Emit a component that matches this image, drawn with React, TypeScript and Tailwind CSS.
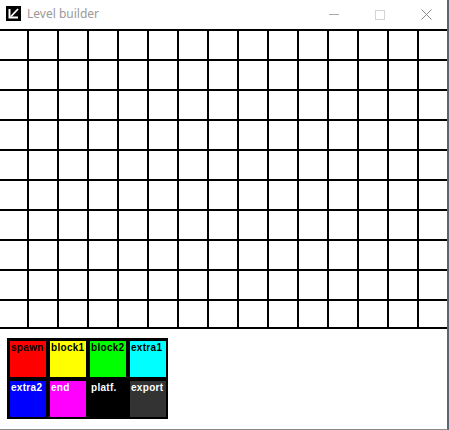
import React from 'react';

const COLS = 16;
const ROWS = 10;

const TOOLS = [
  { label: 'spawn', bg: 'bg-[#ff0000]', fg: 'text-black' },
  { label: 'block1', bg: 'bg-[#ffff00]', fg: 'text-black' },
  { label: 'block2', bg: 'bg-[#00ff00]', fg: 'text-black' },
  { label: 'extra1', bg: 'bg-[#00ffff]', fg: 'text-black' },
  { label: 'extra2', bg: 'bg-[#0000ff]', fg: 'text-white' },
  { label: 'end', bg: 'bg-[#ff00ff]', fg: 'text-white' },
  { label: 'platf.', bg: 'bg-black', fg: 'text-white' },
  { label: 'export', bg: 'bg-[#333333]', fg: 'text-white' },
];

const AppIcon = () => (
  <svg width="15" height="15" viewBox="0 0 15 15">
    <rect width="15" height="15" fill="#000" />
    <path d="M3.5 3 V11.5 H12" stroke="#fff" strokeWidth="2" fill="none" />
    <path d="M5 10.5 L12 3" stroke="#fff" strokeWidth="1.8" fill="none" />
  </svg>
);

const TitleBar = () => (
  <div className="h-[29px] flex items-center bg-white">
    <div className="ml-[6px] mt-[-2px]">
      <AppIcon />
    </div>
    <span className="ml-[6px] text-[12px] text-[#999999] font-['Noto_Sans',sans-serif] mt-[-2px]">
      Level builder
    </span>
    <div className="ml-auto flex items-center h-full">
      <div className="w-[46px] h-full flex items-center justify-center">
        <div className="w-[10px] h-px bg-[#aaaaaa]" />
      </div>
      <div className="w-[46px] h-full flex items-center justify-center">
        <div className="w-[10px] h-[10px] border border-[#d4d4d4]" />
      </div>
      <div className="w-[46px] h-full flex items-center justify-center mr-[-2px]">
        <svg width="11" height="11" viewBox="0 0 11 11">
          <path d="M0.5 0.5 L10.5 10.5 M10.5 0.5 L0.5 10.5" stroke="#8a8a8a" strokeWidth="1" />
        </svg>
      </div>
    </div>
  </div>
);

const LevelGrid = () => (
  <div className="h-[300px] overflow-hidden border-b-2 border-black bg-white">
    <div className="grid grid-cols-[repeat(16,30px)] ml-[-3px]">
      {Array.from({ length: COLS * ROWS }).map((_, i) => (
        <div key={i} className="h-[30px] border-l-2 border-t-2 border-black" />
      ))}
    </div>
  </div>
);

const Palette = () => (
  <div className="ml-[7px] mt-[9px] w-[161px] bg-black pt-[3px] pl-[3px] pr-[2px] pb-[2px] grid grid-cols-[repeat(4,36px)] gap-[4px]">
    {TOOLS.map(t => (
      <div
        key={t.label}
        className={`${t.bg} ${t.fg} h-[36px] pl-[1px] pt-[2px] text-[10px] font-bold leading-none tracking-[0.3px] font-['Liberation_Sans',Arial,sans-serif]`}
      >
        {t.label}
      </div>
    ))}
  </div>
);

export default function App() {
  return (
    <div className="w-[449px] h-[430px] bg-white overflow-hidden">
      <div className="w-[449px] h-[430px] flex flex-col border-r-2 border-r-[#5a6570] border-b border-b-[#8a8a8a]">
        <TitleBar />
        <LevelGrid />
        <div className="flex-1 bg-white">
          <Palette />
        </div>
      </div>
    </div>
  );
}
